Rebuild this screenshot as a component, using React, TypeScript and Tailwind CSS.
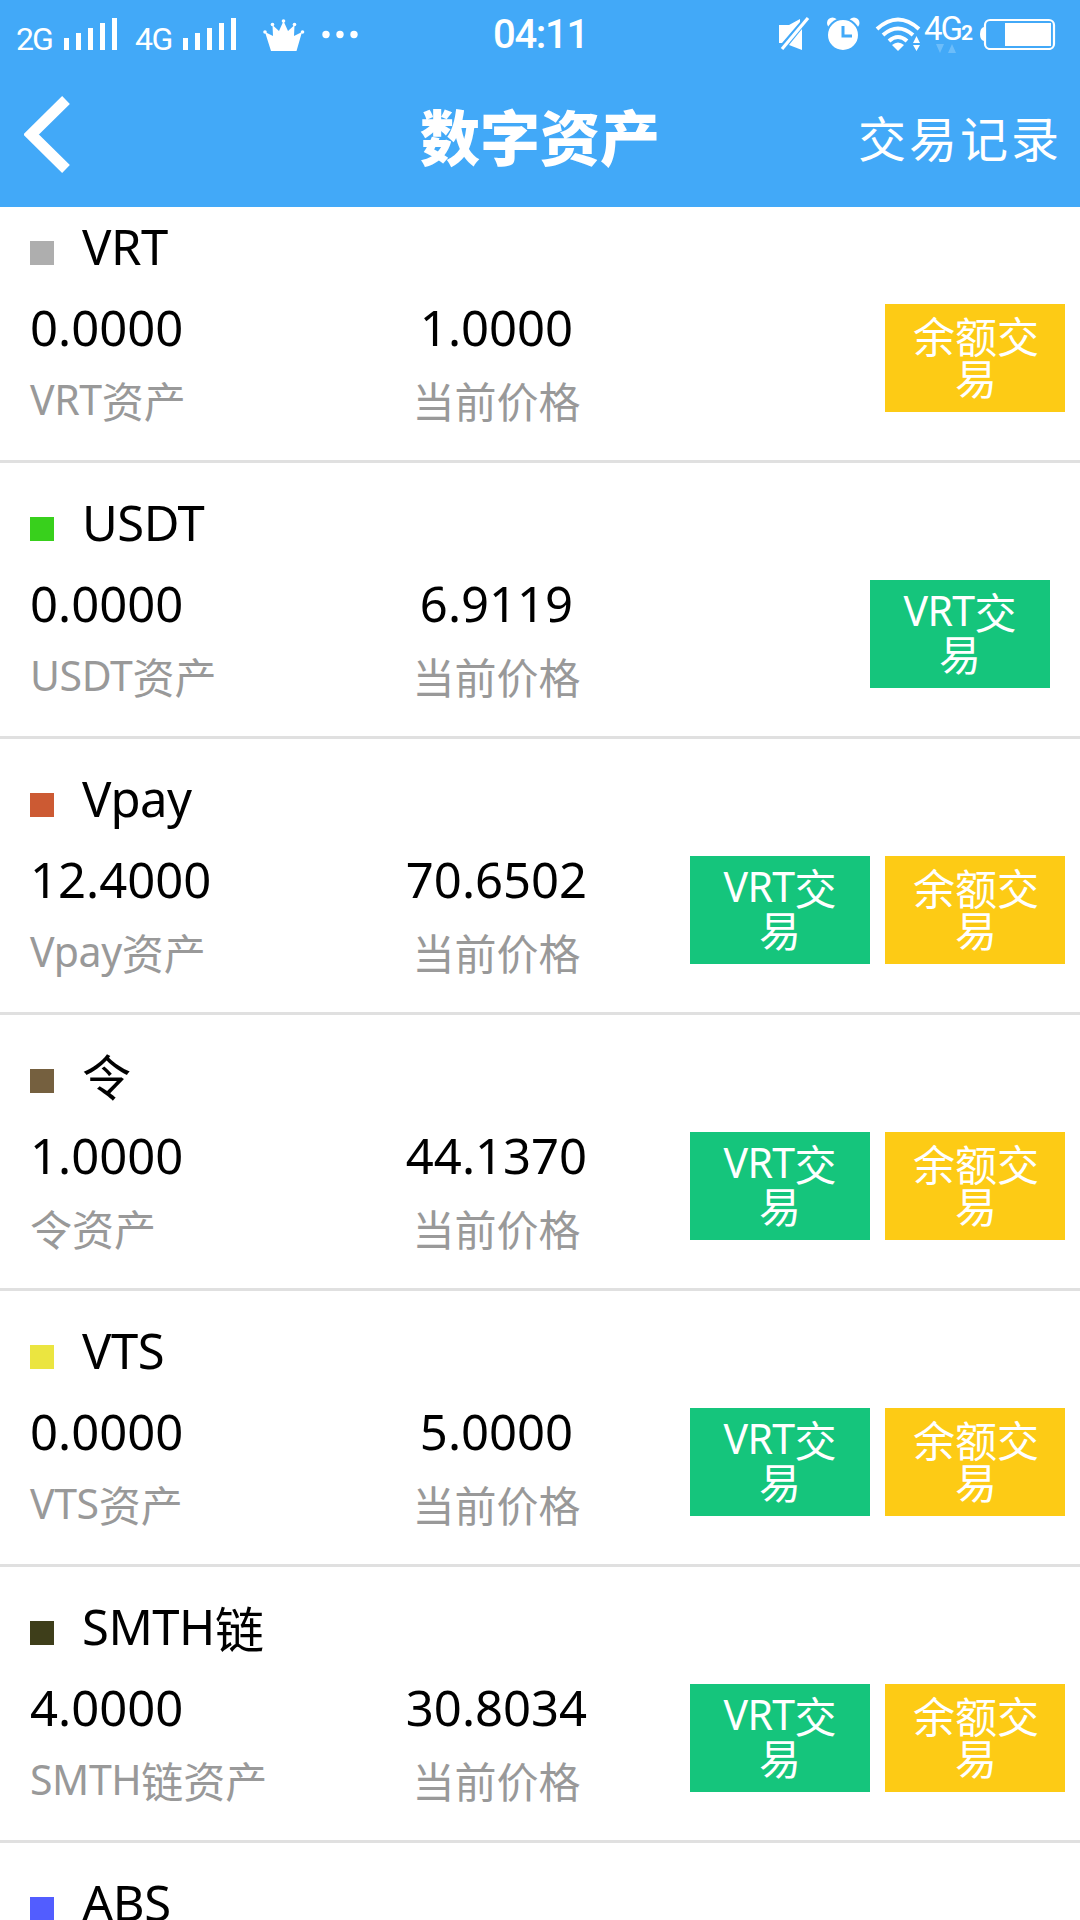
const assets = [
  { name: 'VRT', suffix: '', color: '#aeaeae', amount: '0.0000', price: '1.0000', vrt: false, balance: true },
  { name: 'USDT', suffix: '', color: '#38d01c', amount: '0.0000', price: '6.9119', vrt: true, balance: false },
  { name: 'Vpay', suffix: '', color: '#cc5a33', amount: '12.4000', price: '70.6502', vrt: true, balance: true },
  { name: '', suffix: '令', color: '#75603f', amount: '1.0000', price: '44.1370', vrt: true, balance: true },
  { name: 'VTS', suffix: '', color: '#ebe540', amount: '0.0000', price: '5.0000', vrt: true, balance: true },
  { name: 'SMTH', suffix: '链', color: '#3e3e1a', amount: '4.0000', price: '30.8034', vrt: true, balance: true },
];

type Asset = (typeof assets)[number];

function Signal() {
  return (
    <svg width="56" height="34" viewBox="0 0 56 34" fill="#fff">
      <rect x="0" y="21" width="5" height="12" />
      <rect x="12" y="16" width="5" height="17" />
      <rect x="24" y="11" width="5" height="22" />
      <rect x="36" y="6" width="5" height="27" />
      <rect x="48" y="1" width="5" height="32" />
    </svg>
  );
}

function StatusBar() {
  return (
    <div className="relative h-[68px] font-[Roboto,sans-serif] text-white">
      <div className="flex h-full items-start pl-4">
        <span className="mt-[21px] w-[48px] text-[32px] leading-[36px] tracking-[-2px]">2G</span>
        <div className="mt-[17px] w-[71px]"><Signal /></div>
        <span className="mt-[21px] w-[48px] text-[32px] leading-[36px] tracking-[-1.500px]">4G</span>
        <div className="mt-[17px] w-[80px]"><Signal /></div>
        <svg className="mt-[18px]" width="42" height="34" viewBox="0 0 42 34" fill="#fff">
          <path d="M8 33 L2 14 L10 18 L9.500 7 L16 13 L20.500 3 L25 13 L31.500 7 L31 18 L39 14 L33.500 33 Z" />
          <circle cx="2" cy="14" r="1.800" />
          <circle cx="9.500" cy="6.500" r="1.800" />
          <circle cx="20.500" cy="3" r="1.800" />
          <circle cx="31.500" cy="6.500" r="1.800" />
          <circle cx="39.500" cy="14" r="1.800" />
        </svg>
        <svg className="mt-[30px] ml-[17px]" width="38" height="9" viewBox="0 0 38 9" fill="#fff">
          <circle cx="4" cy="4.500" r="3.700" />
          <circle cx="18" cy="4.500" r="3.700" />
          <circle cx="32" cy="4.500" r="3.700" />
        </svg>
      </div>
      <div className="absolute top-[14px] left-[493px] text-[40px] leading-[42px] font-medium tracking-[-1.300px]">04:11</div>
      <div className="absolute top-0 right-0 flex h-full items-start pr-[24px]">
        <svg className="mt-[17px] mr-[16px]" width="32" height="34" viewBox="0 0 32 34" fill="#fff">
          <path d="M0 8 H10 L21 2 V5 L3 26 H0 Z" />
          <path d="M23 12 V33 L10 28 Z" />
          <path d="M3 32 L29 1" stroke="#fff" strokeWidth="3.200" />
        </svg>
        <svg className="mt-[17px] mr-[14px]" width="34" height="34" viewBox="0 0 34 34">
          <circle cx="5.500" cy="6" r="5.500" fill="#fff" />
          <circle cx="27" cy="6" r="5.500" fill="#fff" />
          <circle cx="16" cy="18" r="16" fill="#fff" stroke="#42a9f8" strokeWidth="2" />
          <path d="M16 9 V19 H25" fill="none" stroke="#42a9f8" strokeWidth="3" />
        </svg>
        <svg className="mt-[17px] mr-[2px]" width="47" height="35" viewBox="0 0 47 35" fill="none" stroke="#fff" strokeWidth="4">
          <path d="M2 12 Q23 -7 44 12" />
          <path d="M8 18 Q23 5 38 18" />
          <path d="M14 24 Q23 16 32 24" />
          <path d="M17 28 Q23 23 29 28 L23 34 Z" fill="#fff" stroke="none" />
          <path d="M38 26 L41.500 19 L45 26 Z M38 28 L41.500 34 L45 28 Z" fill="#fff" stroke="none" />
        </svg>
        <div className="relative mr-[7px] w-[49px]">
          <div className="mt-[11px] flex items-baseline">
            <span className="text-[33px] leading-[36px] tracking-[-2px]">4G</span>
            <span className="text-[21px] leading-[24px] font-bold">2</span>
          </div>
          <svg className="absolute top-[44px] left-[12px]" width="21" height="10" viewBox="0 0 21 10" fill="#6cbdfa">
            <path d="M0 0 H8 L4 9 Z M12 9 H20 L16 0 Z" />
          </svg>
        </div>
        <svg className="mt-[18px]" width="76" height="32" viewBox="0 0 76 32">
          <path d="M4 9 Q0 10 0 16 Q0 22 4 23 Z" fill="#fff" />
          <rect x="5" y="2" width="69" height="29" rx="5" fill="none" stroke="#fff" strokeWidth="2.200" />
          <rect x="25" y="5" width="46" height="23" fill="#fff" />
        </svg>
      </div>
    </div>
  );
}

function Header() {
  return (
    <div className="relative flex h-[139px] items-start justify-between text-white">
      <svg className="mt-[28px] ml-[24px]" width="46" height="77" viewBox="0 0 46 77">
        <path d="M42 4 L7 38.500 L42 73" fill="none" stroke="#fff" strokeWidth="11" />
      </svg>
      <h1 className="absolute inset-x-0 top-[40px] text-center text-[60px] leading-[60px] font-black">数字资产</h1>
      <button className="mt-[45px] mr-[18px] text-[48px] leading-[52px] tracking-[3px]">交易记录</button>
    </div>
  );
}

function Dot({ color }: { color: string }) {
  return <div className="mt-[54px] h-6 w-6" style={{ backgroundColor: color }}></div>;
}

function AssetRow({ asset }: { asset: Asset }) {
  return (
    <div className="h-[276px] shrink-0 border-b-[3px] border-[#e0e0e0]">
      <div className="flex h-[100px] items-start pl-[30px]">
        <Dot color={asset.color} />
        <div className="mt-[32px] ml-[28px] text-[49px] leading-[60px]">
          <span className="align-[3px] leading-[30px] tracking-[-0.500px]">{asset.name}</span>
          {asset.suffix}
        </div>
      </div>
      <div className="flex">
        <div className="w-[360px] pl-[30px]">
          <p className="mt-[10px] text-[49px] leading-[60px]">{asset.amount}</p>
          <p className="mt-[20px] text-[42px] leading-[50px] whitespace-nowrap text-[#999999]">
            <span className="align-[3px] text-[41px] leading-[30px] tracking-[-0.400px]">{asset.name}</span>
            {asset.suffix}资产
          </p>
        </div>
        <div className="w-[273px] text-center">
          <p className="mt-[10px] text-[49px] leading-[60px]">{asset.price}</p>
          <p className="mt-[20px] text-[42px] leading-[50px] text-[#999999]">当前价格</p>
        </div>
        <div className="flex flex-1 justify-end gap-[15px] pt-[17px] pr-[15px] text-[42px] leading-[42px] text-white">
          {asset.vrt && (
            <button
              className={
                asset.balance
                  ? 'h-[108px] w-[180px] bg-[#15c57c] px-6'
                  : 'mr-[15px] h-[108px] w-[180px] bg-[#15c57c] px-6'
              }
            >
              <span className="align-[3px] text-[41px] leading-[30px] tracking-[-0.700px]">VRT</span>交易
            </button>
          )}
          {asset.balance && (
            <button className="h-[108px] w-[180px] bg-[#fdcb15] pr-[22px] pl-6">余额交易</button>
          )}
        </div>
      </div>
    </div>
  );
}

export default function App() {
  return (
    <div className="flex h-[1920px] w-[1080px] flex-col overflow-hidden bg-white font-['Noto_Sans','Noto_Sans_CJK_SC',sans-serif] text-black">
      <div className="z-10 shrink-0 bg-[#42a9f8]">
        <StatusBar />
        <Header />
      </div>
      <div className="-mt-5 flex flex-col">
        {assets.map(asset => (
          <AssetRow key={asset.color} asset={asset} />
        ))}
        <div className="flex h-[77px] items-start overflow-hidden pl-[30px]">
          <Dot color="#525dff" />
          <div className="mt-[29px] ml-[28px] text-[49px] leading-[60px] tracking-[-0.500px]">ABS</div>
        </div>
      </div>
    </div>
  );
}
